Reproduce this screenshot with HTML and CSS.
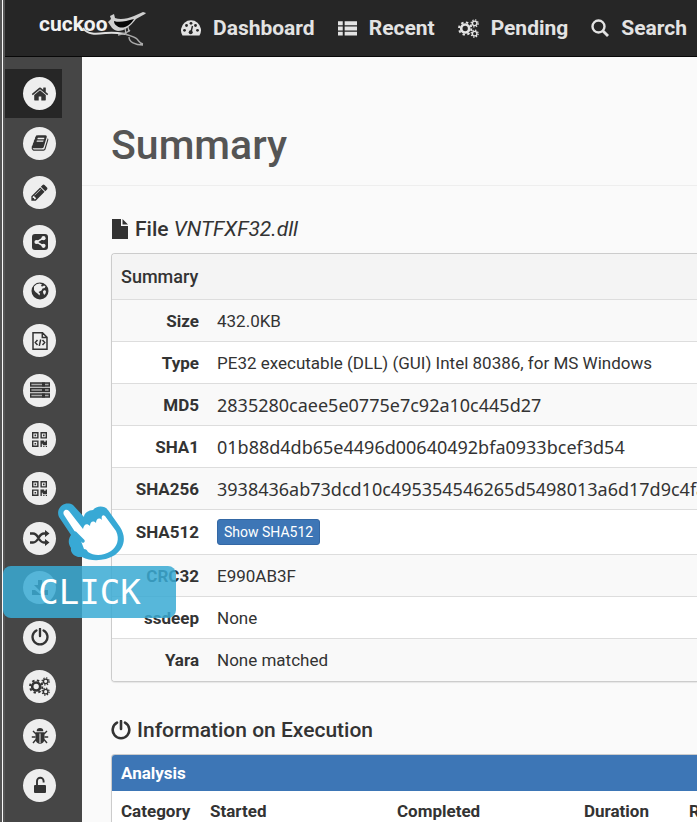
FILE: index.html
```html
<!DOCTYPE html>
<html lang="en">
<head>
<meta charset="utf-8">
<title>Cuckoo – Summary</title>
<link rel="stylesheet" href="styles.css">
</head>
<body>
<svg class="defs" aria-hidden="true">
<defs>
<symbol id="gears" viewBox="0 0 22 20">
<g fill="none" stroke="currentColor">
<circle cx="7.500" cy="10" r="4.200" stroke-width="2.800"/>
<circle cx="7.500" cy="10" r="6.500" stroke-width="2" stroke-dasharray="2.550 2.550"/>
<circle cx="17.500" cy="4.600" r="2.400" stroke-width="1.500"/>
<circle cx="17.500" cy="4.600" r="3.700" stroke-width="1.300" stroke-dasharray="1.450 1.450"/>
<circle cx="17.500" cy="15.400" r="2.400" stroke-width="1.500"/>
<circle cx="17.500" cy="15.400" r="3.700" stroke-width="1.300" stroke-dasharray="1.450 1.450"/>
</g>
</symbol>
<symbol id="power" viewBox="0 0 20 20"><path d="M6 2.700a8.300 8.300 0 1 0 8 0M10 1v8" fill="none" stroke="currentColor" stroke-width="2.600" stroke-linecap="round"/></symbol>
<symbol id="qr" viewBox="0 0 16 16"><path fill="currentColor" fill-rule="evenodd" d="M0 0h7v7H0zM1.500 1.500v4h4v-4zM2.700 2.700h1.700v1.700H2.700zM9 0h7v7H9zM10.500 1.500v4h4v-4zM11.700 2.700h1.700v1.700h-1.700zM0 9h7v7H0zM1.500 10.500v4h4v-4zM2.700 11.700h1.700v1.700H2.700zM9 9h4v1.500h1.500V9H16v5h-4.500v-1.500h-1V16H9zM12 15h1.300v1H12zM14.700 15H16v1h-1.300z"/></symbol>
</defs>
</svg>
<div class="app">
<header class="topbar">
<a class="logo" href="#" aria-label="cuckoo">
<span class="logo-text">cuckoo</span>
<svg class="bird" viewBox="0 0 64 38" aria-hidden="true">
<path d="M1 16C6 23 14 22 24 21c8-1 13 0 19 1" fill="none" stroke="#e0e0e0" stroke-width="2"/>
<path d="M36 23c6-1 9-2 12-5M43 22c6 2 10 3 12 5s2 4 6 5M47 25c0 5 6 8 14 8" fill="none" stroke="#aaa" stroke-width="1.400"/>
<path d="M26 10l3-3-1-3 4-2 1 4c5 2 12 1 19-2l9-4 3 1-1 1-9 5c-6 8-12 12-18 12-6-1-7-5-10-9z" fill="#cfcfcf"/>
<path d="M32 9c6 2 12 0 20-2-4 7-12 11-17 7-2-1-3-3-3-5z" fill="#050505"/>
<path d="M43 16l1 6m2-7l1 5" stroke="#bbb" stroke-width="1.200"/>
</svg>
</a>
<nav class="topnav" aria-label="Main">
<a href="#"><svg viewBox="0 0 20 16" width="20" height="16" aria-hidden="true"><path fill="currentColor" d="M1.500 15.500A10 10 0 1 1 18.500 15.500z"/><g fill="#262626"><circle cx="3.500" cy="10.300" r="1.400"/><circle cx="5.500" cy="5.500" r="1.400"/><circle cx="10" cy="3.300" r="1.400"/><circle cx="14.500" cy="5.500" r="1.400"/><circle cx="16.500" cy="10.300" r="1.400"/></g><path d="M11.500 6l-1.500 6" stroke="#262626" stroke-width="1.400"/><circle cx="9.700" cy="12.300" r="2" fill="#262626"/></svg><span>Dashboard</span></a>
<a href="#"><svg viewBox="0 0 20 16" width="19" height="16" aria-hidden="true"><path fill="currentColor" d="M0 1h5v4H0zM7 1h13v4H7zM0 6.500h5v4H0zM7 6.500h13v4H7zM0 12h5v4H0zM7 12h13v4H7z"/></svg><span>Recent</span></a>
<a href="#"><svg width="21" height="19" aria-hidden="true"><use href="#gears"/></svg><span>Pending</span></a>
<a href="#"><svg viewBox="0 0 18 18" width="18" height="18" aria-hidden="true"><path d="M12 12l5 5" stroke="currentColor" stroke-width="2.800"/><circle cx="7.500" cy="7.500" r="6" fill="none" stroke="currentColor" stroke-width="2.400"/></svg><span>Search</span></a>
</nav>
</header>
<div class="body">
<nav class="sidebar" aria-label="Report sections">
<a class="active" href="#" aria-label="Summary"><i><svg viewBox="0 0 1792 1792" width="18" height="18"><path fill="currentColor" d="M1472 992v480q0 26-19 45t-45 19h-384v-384h-256v384h-384q-26 0-45-19t-19-45v-480q0-1 .5-3t.5-3l575-474 575 474q1 2 1 6zm223-69l-62 74q-8 9-21 11h-3q-13 0-21-7l-692-577-692 577q-12 8-24 7-13-2-21-11l-62-74q-8-10-7-23.500t11-21.500l719-599q32-26 76-26t76 26l244 204v-195q0-14 9-23t23-9h192q14 0 23 9t9 23v408l219 182q10 8 11 21.500t-7 23.500z"/></svg></i></a>
<a href="#" aria-label="Static analysis"><i><svg viewBox="0 0 1792 1792" width="18" height="18"><path fill="currentColor" d="M1703 478q40 57 18 129l-275 906q-19 64-76.500 107.500t-122.500 43.500h-923q-77 0-148.500-53.500t-99.500-131.500q-24-67-2-127 0-4 3-27t4-37q1-8-3-21.500t-3-19.500q2-11 8-21t16.500-23.500 16.500-23.500q23-38 45-91.500t30-91.500q3-10 .5-30t-.5-28q3-11 17-28t17-23q21-36 42-92t25-90q1-9-2.500-32t.5-28q4-13 22-30.500t22-22.500q19-26 42.500-84.500t27.500-96.500q1-8-3-25.500t-2-26.500q2-8 9-18t18-23 17-21q8-12 16.500-30.500t15-35 16-36 19.500-32 26.500-23.500 36-11.500 47.500 5.500l-1 3q38-9 51-9h761q74 0 114 56t18 130l-274 906q-36 119-71.500 153.500t-128.500 34.500h-869q-27 0-38 15-11 16-1 43 24 70 144 70h923q29 0 56-15.500t35-41.500l300-987q7-22 5-57 38 15 59 43zm-1064 2q-4 13 2 22.500t20 9.500h608q13 0 25.500-9.500t16.500-22.500l21-64q4-13-2-22.500t-20-9.500h-608q-13 0-25.500 9.500t-16.500 22.500zm-83 256q-4 13 2 22.500t20 9.500h608q13 0 25.500-9.500t16.500-22.500l21-64q4-13-2-22.500t-20-9.500h-608q-13 0-25.500 9.500t-16.500 22.500z"/></svg></i></a>
<a href="#" aria-label="Extracted"><i><svg viewBox="0 0 1792 1792" width="19" height="19"><path fill="currentColor" d="M491 1536l91-91-235-235-91 91v107h128v128h107zm523-928q0-22-22-22-10 0-17 7l-542 542q-7 7-7 17 0 22 22 22 10 0 17-7l542-542q7-7 7-17zm-54-192l416 416-832 832h-416v-416zm683 96q0 53-37 90l-166 166-416-416 166-165q36-38 90-38 53 0 91 38l235 234q37 39 37 91z"/></svg></i></a>
<a href="#" aria-label="Behavior"><i><svg viewBox="0 0 16 16" width="16" height="16"><rect width="16" height="16" rx="3" fill="currentColor"/><path d="M11.500 4L4.500 8l7 4" fill="none" stroke="#eee" stroke-width="1.500"/><g fill="#eee"><circle cx="11.500" cy="4.200" r="2.100"/><circle cx="4.500" cy="8" r="2.100"/><circle cx="11.500" cy="11.800" r="2.100"/></g></svg></i></a>
<a href="#" aria-label="Network"><i><svg viewBox="0 0 18 18" width="18" height="18"><circle cx="9" cy="9" r="8.500" fill="currentColor"/><path fill="#eee" d="M3 4.500L5.500 2.300l3.300-.8L11 2.600 9.800 4l1.700.5 1.500-1 1.500.8-.8 1.600-2.200.6-1 2-2 1-1 .5 1.500 1.500-.5 2-2-2-2-1.500-1.500-2zM12 9l2-1 1 1.500-.5 2-1.300 1.500-1-2z"/></svg></i></a>
<a href="#" aria-label="Source"><i><svg viewBox="0 0 16 18" width="16" height="18"><path fill="none" stroke="currentColor" stroke-width="1.500" d="M1 .800h9.500L15 5.300v11.900H1zM10.300 1v4.500H15M5.500 8l-2.200 2.500L5.500 13M10.500 8l2.200 2.500-2.200 2.500M8.700 7.500l-1.400 6.300"/></svg></i></a>
<a href="#" aria-label="Dropped files"><i><svg viewBox="0 0 20 16" width="20" height="16"><g fill="#aaa" stroke="currentColor" stroke-width="1.400"><path d="M.7 1h18.600v3H.7zM.7 6.500h18.600v3H.7zM.7 12h18.600v3H.7z"/></g><path fill="currentColor" d="M12 .5h3v4h-3zM12 6h3v4h-3zM12 11.500h3v4h-3z"/></svg></i></a>
<a href="#" aria-label="Buffers"><i><svg width="15" height="15"><use href="#qr"/></svg></i></a>
<a href="#" aria-label="Memory"><i><svg width="15" height="15"><use href="#qr"/></svg></i></a>
<a href="#" aria-label="Compare"><i><svg viewBox="0 0 20 16" width="20" height="16"><path fill="none" stroke="currentColor" stroke-width="2.300" d="M0 3.500h3c6 0 5 9 11 9h2M0 12.500h3c6 0 5-9 11-9h2"/><path fill="currentColor" d="M15 0l4.500 3.500L15 7zM15 9l4.500 3.500L15 16z"/></svg></i></a>
<a href="#" aria-label="Export"><i><svg viewBox="0 0 18 18" width="18" height="18"><path fill="currentColor" d="M7 1h4v5h4l-6 6-6-6h4zM1 11h3l5 4 5-4h3v5H1z"/></svg></i></a>
<a href="#" aria-label="Reboot"><i><svg width="18" height="18"><use href="#power"/></svg></i></a>
<a href="#" aria-label="Options"><i><svg width="21" height="19"><use href="#gears"/></svg></i></a>
<a href="#" aria-label="Feedback"><i><svg viewBox="0 0 18 18" width="18" height="18"><path fill="currentColor" d="M5.700 4.300a3.300 3.300 0 0 1 6.600 0zM4.500 5.200h9v7a4.500 4.500 0 0 1-9 0z"/><path d="M5 7L2 4M4.500 10H.800M5 12.500L2 16M13 7l3-3M13.500 10h3.700M13 12.500l3 3.500" stroke="currentColor" stroke-width="1.400"/><path d="M9 6.500v9.500" stroke="#eee"/></svg></i></a>
<a href="#" aria-label="Unlock"><i><svg viewBox="0 0 14 18" width="14" height="18"><rect x="1" y="9" width="12" height="8" rx="1" fill="currentColor"/><path d="M4 9V5a3.300 3.300 0 0 1 6.600 0v1.500" fill="none" stroke="currentColor" stroke-width="1.900"/></svg></i></a>
</nav>
<main class="content">
<div class="page-head"><h1>Summary</h1></div>
<section class="file">
<h2><svg viewBox="0 0 16 20" width="18" height="20" aria-hidden="true"><path fill="currentColor" d="M0 0h9v7h7v13H0zM10.500 0L16 5.500h-5.500z"/></svg><span>File <em>VNTFXF32.dll</em></span></h2>
<div class="panel">
<h3>Summary</h3>
<table class="facts">
<tr><th scope="row">Size</th><td>432.0KB</td></tr>
<tr><th scope="row">Type</th><td>PE32 executable (DLL) (GUI) Intel 80386, for MS Windows</td></tr>
<tr><th scope="row">MD5</th><td class="hash">2835280caee5e0775e7c92a10c445d27</td></tr>
<tr><th scope="row">SHA1</th><td class="hash">01b88d4db65e4496d00640492bfa0933bcef3d54</td></tr>
<tr><th scope="row">SHA256</th><td class="hash">3938436ab73dcd10c495354546265d5498013a6d17d9c4fa</td></tr>
<tr class="action"><th scope="row">SHA512</th><td><button type="button">Show SHA512</button></td></tr>
<tr><th scope="row">CRC32</th><td>E990AB3F</td></tr>
<tr><th scope="row">ssdeep</th><td>None</td></tr>
<tr><th scope="row">Yara</th><td>None matched</td></tr>
</table>
</div>
</section>
<section class="execution">
<h2><svg width="20" height="20" aria-hidden="true"><use href="#power"/></svg><span>Information on Execution</span></h2>
<div class="panel primary">
<h3>Analysis</h3>
<table class="runs">
<tr><th scope="col">Category</th><th scope="col">Started</th><th scope="col">Completed</th><th scope="col">Duration</th><th scope="col">Routing</th></tr>
</table>
</div>
</section>
</main>
</div>
</div>
<div class="hint">
<svg class="hand" viewBox="0 0 70 60" width="70" height="60" aria-hidden="true">
<path fill="#38a9d5" d="M2 15C-2 6 8-2 16 3L27 15C27 11 32 8 36 8 39 4 47 3 51 8L63 25C70 36 67 46 58 53 48 59 35 60 25 55 17 56 13 50 14 46 11 42 11 37 14 33z"/>
<path fill="#fff" d="M7 13C5 9 9 6 12 9L26 27C27 22 30 21 33 24 33 20 36 18 39 21 39 17 42 15 45 18 44 15 45 12 48 14L59 29C63 37 60 45 54 49 46 54 37 54 31 50 30 48 29 47 27 47L24 39z"/>
<path fill="none" stroke="#38a9d5" stroke-width="3.500" stroke-linecap="round" d="M18 31l8 8"/>
</svg>
<div class="click">CLICK</div>
</div>
</body>
</html>
```

FILE: styles.css
```css
* { box-sizing: border-box; }

body {
  margin: 0;
  background: #fafafa;
  color: #333;
  font: 17px/20px Roboto, sans-serif;
}

.defs {
  position: absolute;
  width: 0;
  height: 0;
}

.app {
  display: flex;
  flex-direction: column;
  height: 100vh;
  overflow: hidden;
  border-left: 5px double #555;
}

.topbar {
  display: flex;
  flex: none;
  align-items: center;
  height: 57px;
  padding-left: 34px;
  overflow: hidden;
  background: #262626;
  border-bottom: 1px solid #080808;
}

.logo {
  position: relative;
  display: flex;
  flex: none;
  width: 142px;
  height: 38px;
  color: #f2f2f2;
  text-decoration: none;
}

.logo-text {
  font-size: 21px;
  font-weight: 700;
  line-height: 30px;
}

.bird {
  position: absolute;
  top: 3px;
  left: 43px;
  width: 64px;
  height: 38px;
}

.topnav {
  display: flex;
  gap: 23px;
}

.topnav a {
  display: flex;
  align-items: center;
  gap: 12px;
  color: #e3e3e3;
  font-size: 21px;
  font-weight: 700;
  text-decoration: none;
}

.body {
  display: flex;
  flex: 1;
  min-height: 0;
}

.sidebar {
  display: flex;
  flex: none;
  flex-direction: column;
  width: 77px;
  padding: 12px 20px 12px 0;
  background: #464646;
}

.sidebar a {
  display: flex;
  flex: 1;
  align-items: center;
  justify-content: center;
  padding-left: 12px;
  color: #333;
}

.sidebar .active { background: #262626; }

.sidebar i {
  display: flex;
  align-items: center;
  justify-content: center;
  width: 33px;
  height: 33px;
  border-radius: 50%;
  background: #eee;
}

.content {
  flex: 1;
  min-width: 0;
  overflow: hidden;
}

.page-head {
  padding: 64px 29px 16px;
  border-bottom: 1px solid #eee;
}

h1 {
  margin: 0;
  color: #555;
  font-size: 41px;
  font-weight: 500;
  line-height: 48px;
}

section { padding-left: 29px; }

h2 {
  display: flex;
  align-items: center;
  gap: 6px;
  margin: 0;
  font-size: 21px;
  font-weight: 500;
  line-height: 24px;
}

h2 em { font-weight: 400; }

.file { padding-top: 31px; }
.execution { padding-top: 36px; }

.panel {
  margin-top: 12px;
  border: 1px solid #ccc;
  border-right: 0;
  border-radius: 4px 0 0 4px;
  overflow: hidden;
  box-shadow: 0 1px 1px rgba(0, 0, 0, .08);
}

h3 {
  margin: 0;
  padding: 13px 9px;
  background: #f4f4f4;
  font-size: 18px;
  font-weight: 500;
  line-height: 20px;
}

table {
  width: 100%;
  border-collapse: collapse;
  table-layout: fixed;
}

.facts tr {
  height: 42px;
  background: #fff;
  border-top: 1px solid #ddd;
}

.facts tr:nth-child(odd) { background: #f9f9f9; }
.facts .action { height: 45px; }

.facts th {
  width: 96px;
  padding: 0 9px 0 0;
  text-align: right;
}

.facts td {
  padding: 0 9px;
  white-space: nowrap;
}

.facts .hash {
  font-family: "Noto Sans", sans-serif;
  font-size: 18px;
}

button {
  display: block;
  height: 26px;
  padding: 0 6px;
  border: 1px solid #3468a5;
  border-radius: 3px;
  background: #3d76b6;
  color: #fff;
  font: 14px/20px Roboto, sans-serif;
}

.primary h3 {
  padding: 8px 9px;
  background: #3d76b6;
  color: #fff;
  font-size: 17px;
  font-weight: 700;
}

.panel .facts { margin-top: -1px; }

.runs {
  width: 800px;
  background: #fff;
}

.runs th {
  height: 40px;
  padding: 0 9px;
  text-align: left;
}

.runs th:first-child { width: 89px; }
.runs th:nth-child(2),
.runs th:nth-child(3) { width: 187px; }
.runs th:nth-child(4) { width: 105px; }

.hint {
  position: absolute;
  top: 502px;
  left: 3px;
}

.hand {
  display: block;
  margin-left: 54px;
}

.click {
  width: 173px;
  margin-top: 4px;
  border-radius: 8px;
  background: rgba(58, 170, 212, .85);
  color: #fff;
  font: 34px/52px "DejaVu Sans Mono", monospace;
  text-align: center;
}
```
